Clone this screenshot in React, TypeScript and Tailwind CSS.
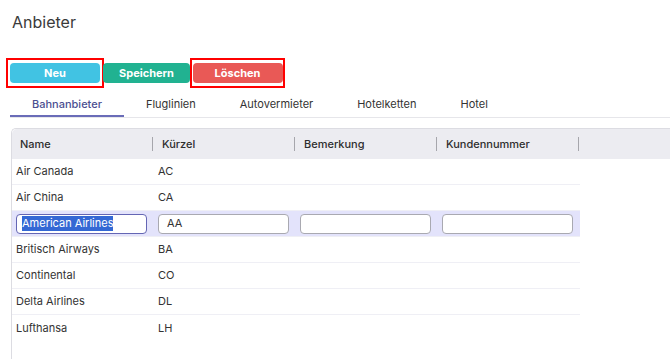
import React from 'react';

const tabs = ['Bahnanbieter', 'Fluglinien', 'Autovermieter', 'Hotelketten', 'Hotel'];
const columns = ['Name', 'Kürzel', 'Bemerkung', 'Kundennummer'];

const rows = [
  { name: 'Air Canada', code: 'AC' },
  { name: 'Air China', code: 'CA' },
  { name: 'American Airlines', code: 'AA', editing: true },
  { name: 'Britisch Airways', code: 'BA' },
  { name: 'Continental', code: 'CO' },
  { name: 'Delta Airlines', code: 'DL' },
  { name: 'Lufthansa', code: 'LH' },
];

function EditRow({ name, code }: { name: string; code: string }) {
  return (
    <div className="flex h-[26px] items-center bg-[#e3e3fb] border-b border-[#efeff5]">
      <div className="w-[142px] shrink-0 pl-[4px]">
        <div className="h-[20px] w-[131px] rounded-[4px] border border-[#6466b4] bg-white pl-[5px] flex items-center">
          <span className="bg-[#3468d4] text-white leading-[15px]">{name}</span>
        </div>
      </div>
      <div className="w-[142px] shrink-0 pl-[4px]">
        <div className="h-[20px] w-[131px] rounded-[4px] border border-[#a9a9b1] bg-white pl-[8px] flex items-center">
          {code}
        </div>
      </div>
      <div className="w-[142px] shrink-0 pl-[4px]">
        <div className="h-[20px] w-[131px] rounded-[4px] border border-[#a9a9b1] bg-white" />
      </div>
      <div className="w-[142px] shrink-0 pl-[4px]">
        <div className="h-[20px] w-[131px] rounded-[4px] border border-[#a9a9b1] bg-white" />
      </div>
    </div>
  );
}

export default function App() {
  return (
    <div className="w-[670px] h-[359px] overflow-hidden bg-white font-['Inter',sans-serif] text-[#333]">
      <h1 className="pl-[12px] pt-[10px] text-[16px] leading-[24px] text-[#3a3a3a]">Anbieter</h1>

      {/* toolbar */}
      <div className="mt-[24px] flex items-center pl-[6px]">
        <div className="flex h-[30px] w-[98px] items-center justify-center border-2 border-[#ff0000]">
          <button className="h-[20px] w-[90px] rounded-[4px] bg-[#41c3e3] text-[11px] font-bold text-white">
            Neu
          </button>
        </div>
        <button className="-ml-[1px] h-[20px] w-[87px] rounded-[4px] bg-[#21b291] text-[11px] font-bold text-white">
          Speichern
        </button>
        <div className="flex h-[30px] w-[95px] items-center justify-center border-2 border-[#ff0000]">
          <button className="h-[20px] w-[90px] rounded-[4px] bg-[#e95956] text-[11px] font-bold text-white">
            Löschen
          </button>
        </div>
      </div>

      {/* tabs */}
      <div className="mt-[5px] ml-[10px] flex border-b border-[#e6e6ea]">
        {tabs.map((t, i) => (
          <div
            key={t}
            className={
              i === 0
                ? 'px-[22px] h-[24px] leading-[22px] text-[11px] font-medium text-[#4b4f91] border-b-2 border-[#6a6cb8] -mb-[1px]'
                : 'px-[22px] h-[24px] leading-[22px] text-[11px] text-[#333]'
            }
          >
            {t}
          </div>
        ))}
      </div>

      {/* table */}
      <div className="mt-[10px] ml-[11px] h-[240px] rounded-tl-[5px] border-l border-t border-[#dcdce2] text-[11px]">
        <div className="flex h-[30px] items-center bg-[#ececf1] rounded-tl-[5px]">
          {columns.map((c) => (
            <div key={c} className="flex w-[142px] shrink-0 items-center justify-between pl-[8px] pr-[1px] font-medium text-[#2e2e2e]">
              <span>{c}</span>
              <span className="h-[14px] w-[1px] bg-[#a6a6ac]" />
            </div>
          ))}
        </div>
        <div className="w-[568px]">
          {rows.map((r) =>
            r.editing ? (
              <EditRow key={r.name} name={r.name} code={r.code} />
            ) : (
              <div key={r.name} className="flex h-[26px] items-center border-b border-[#efeff5] last:border-b-0">
                <div className="w-[142px] shrink-0 pl-[4px]">{r.name}</div>
                <div className="w-[142px] shrink-0 pl-[4px]">{r.code}</div>
              </div>
            )
          )}
        </div>
      </div>
    </div>
  );
}
